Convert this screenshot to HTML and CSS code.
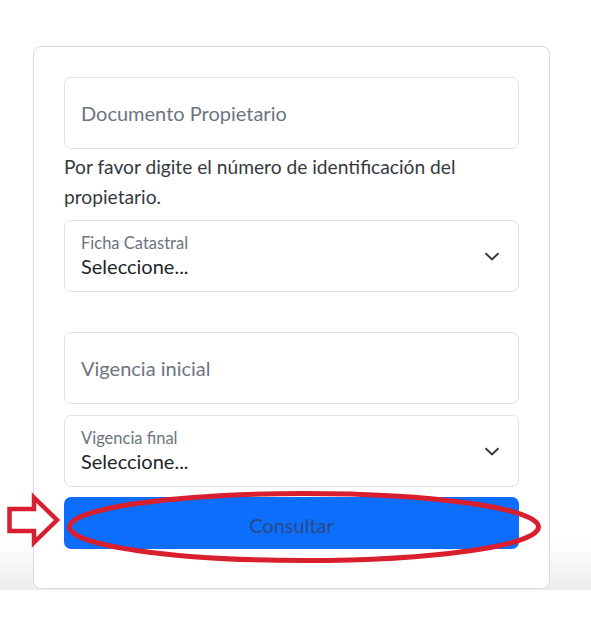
FILE: index.html
```html
<!DOCTYPE html>
<html lang="es">
<head>
<meta charset="utf-8">
<title>Consulta</title>
<link rel="stylesheet" href="styles.css">
</head>
<body>
<div class="page">
  <form class="card">
    <input class="control" type="text" placeholder="Documento Propietario">
    <p class="help">Por favor digite el número de identificación del propietario.</p>
    <div class="control select sel-first">
      <div class="select-text">
        <span class="select-label">Ficha Catastral</span>
        <span class="select-value">Seleccione...</span>
      </div>
      <svg class="chev" width="16" height="9" viewBox="0 0 16 9"><path d="M1.5 1.2 8 7.4 14.5 1.2" fill="none" stroke="#343a40" stroke-width="2"/></svg>
    </div>
    <input class="control input-second" type="text" placeholder="Vigencia inicial">
    <div class="control select sel-second">
      <div class="select-text">
        <span class="select-label">Vigencia final</span>
        <span class="select-value">Seleccione...</span>
      </div>
      <svg class="chev" width="16" height="9" viewBox="0 0 16 9"><path d="M1.5 1.2 8 7.4 14.5 1.2" fill="none" stroke="#343a40" stroke-width="2"/></svg>
    </div>
    <button class="btn" type="button">Consultar</button>
  </form>
  <svg class="annot" width="591" height="618" viewBox="0 0 591 618">
    <path d="M9.5 509 H34 V497.5 L57 520 L34 542.5 V531 H9.5 Z" fill="#fff" stroke="#d91f2d" stroke-width="4.5" stroke-linejoin="miter"/>
    <ellipse cx="304" cy="527" rx="234.5" ry="33.5" fill="none" stroke="#d91f2d" stroke-width="5"/>
  </svg>
</div>
</body>
</html>
```
FILE: styles.css
```css
html, body {
  margin: 0;
  background: #fff;
}
body {
  font-family: Lato, "Noto Sans", "Liberation Sans", sans-serif;
  color: #212529;
}
.page {
  position: relative;
  height: 590px;
  box-sizing: border-box;
  padding-top: 46px;
  background: linear-gradient(to bottom, #fff 0, #fff 540px, #ededed 590px);
}
.card {
  margin: 0 0 0 33px;
  width: 517px;
  box-sizing: border-box;
  border: 1px solid #d9d9d9;
  border-radius: 8px;
  background: #fff;
  padding: 30px 30px 39px;
}
.control {
  display: block;
  width: 100%;
  height: 72px;
  box-sizing: border-box;
  margin: 0;
  border: 1px solid #dee2e6;
  border-radius: 7px;
  padding: 0 16px;
  font-family: inherit;
  font-size: 20px;
  color: #212529;
  background: #fff;
  outline: none;
}
.control::placeholder {
  color: #6c757d;
  opacity: 1;
}
.help {
  margin: 3px 0 8px;
  font-size: 19.2px;
  line-height: 30px;
  color: #343a40;
}
.select {
  display: flex;
  align-items: center;
  justify-content: space-between;
  padding: 0 18px 0 16px;
}
.select-text {
  display: flex;
  flex-direction: column;
}
.select-label {
  font-size: 16.5px;
  line-height: 20px;
  color: #6c757d;
}
.select-value {
  font-size: 20px;
  line-height: 26px;
  color: #212529;
}
.chev {
  display: block;
  margin-right: 0;
}
.sel-first {
  margin-bottom: 40px;
}
.input-second {
  margin-bottom: 11px;
}
.sel-second {
  margin-bottom: 10px;
}
.btn {
  display: block;
  width: 100%;
  height: 52px;
  border: none;
  border-radius: 7px;
  background: #0d6efd;
  color: #2c4a80;
  font-family: inherit;
  font-size: 20px;
  padding: 3px 0 0;
}
.annot {
  position: absolute;
  left: 0;
  top: 0;
  pointer-events: none;
}
```
